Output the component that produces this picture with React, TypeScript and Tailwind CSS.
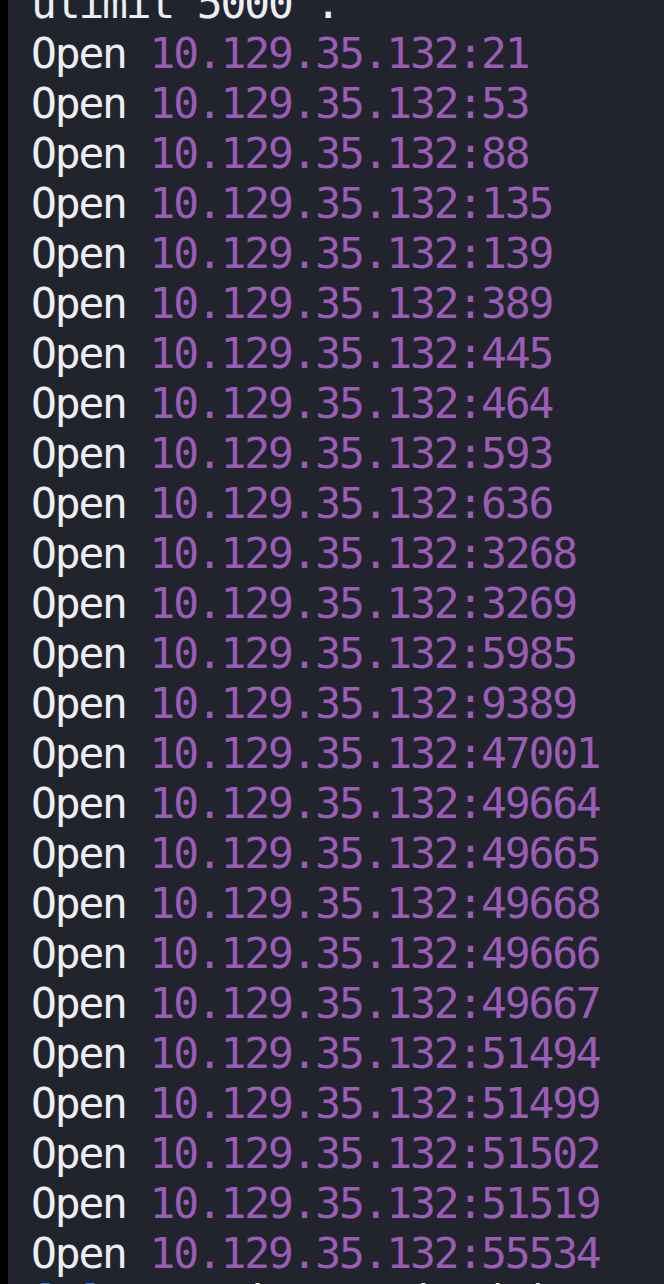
import React from "react";

const ports = [
  "21", "53", "88", "135", "139", "389", "445", "464", "593", "636",
  "3268", "3269", "5985", "9389", "47001", "49664", "49665", "49668",
  "49666", "49667", "51494", "51499", "51502", "51519", "55534",
];

export default function App() {
  return (
    <div className="flex h-[1284px] w-[664px] overflow-hidden bg-[#21242c]">
      <div className="h-full w-[8px] shrink-0 bg-black" />
      <div
        className="-mt-[22px] flex flex-col pl-[23px] text-[43px] leading-[50px] tracking-[-2.2px] text-[#eceef1] whitespace-pre slashed-zero"
        style={{ fontFamily: '"DejaVu Sans Mono", "Liberation Mono", monospace' }}
      >
        <div>ulimit 5000'.</div>
        {ports.map((p) => (
          <div key={p}>
            Open <span className="text-[#9a5cb6]">10.129.35.132:{p}</span>
          </div>
        ))}
        <div className="-mt-[2px]">
          <span className="text-[#2f7df0]">[~]</span> Starting Script(s)
        </div>
      </div>
    </div>
  );
}
